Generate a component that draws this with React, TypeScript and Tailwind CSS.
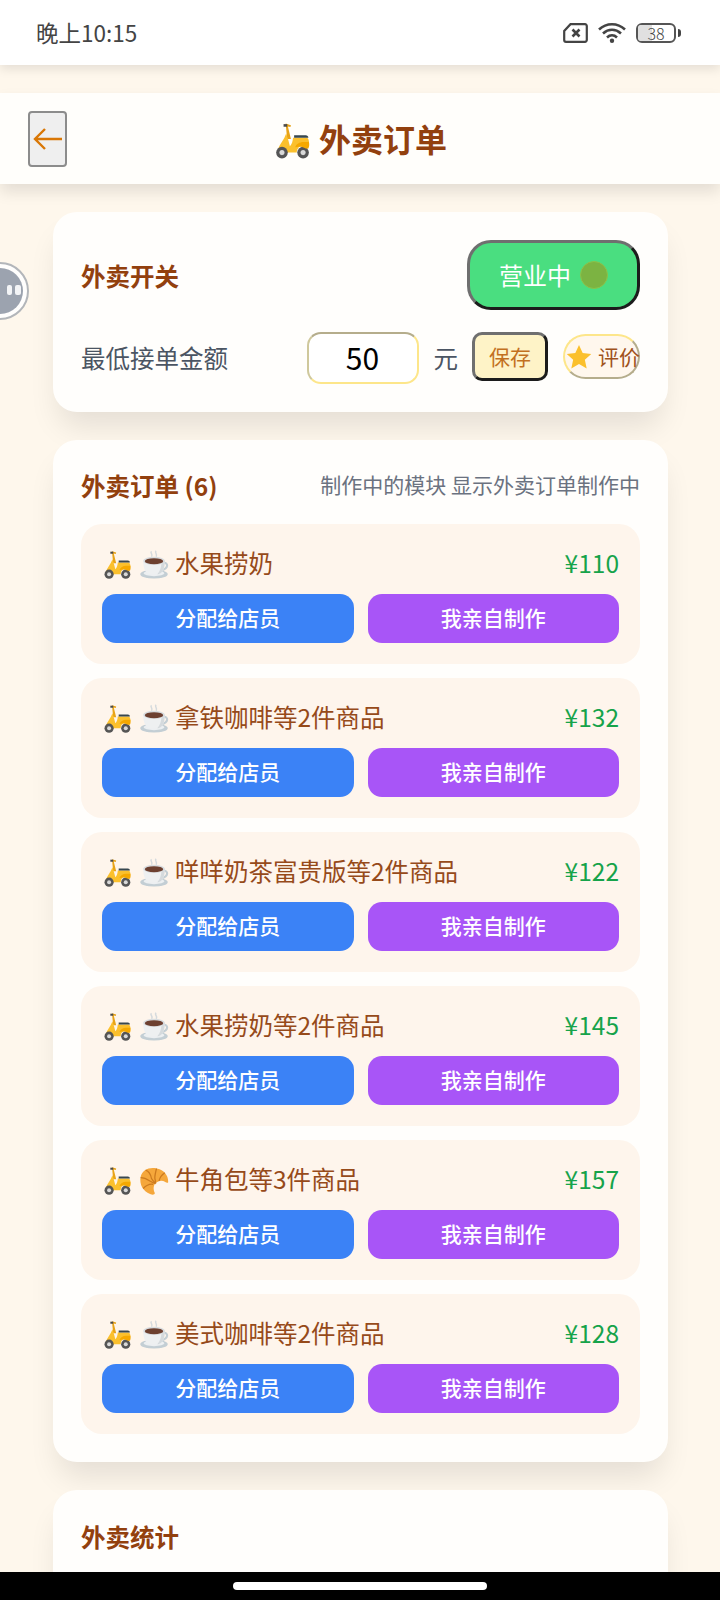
const orders = [
  { id: 1, food: 'coffee', name: '水果捞奶', price: 110 },
  { id: 2, food: 'coffee', name: '拿铁咖啡等2件商品', price: 132 },
  { id: 3, food: 'coffee', name: '咩咩奶茶富贵版等2件商品', price: 122 },
  { id: 4, food: 'coffee', name: '水果捞奶等2件商品', price: 145 },
  { id: 5, food: 'croissant', name: '牛角包等3件商品', price: 157 },
  { id: 6, food: 'coffee', name: '美式咖啡等2件商品', price: 128 },
]

function Scooter({ className }: { className: string }) {
  return (
    <svg viewBox="0 0 36 36" className={className}>
      <path d="M12 1.500l5 1.500-.5 1.800-2.400-.6 2.900 11.800h-3.600z" fill="#e8a317" />
      <path d="M10 2h3.500v2.500H10z" fill="#4b4b4b" />
      <path d="M12.500 11c-2 6-6 10-8 15l4 3h14c0-4 3-7 7-7h4c1-2 1-5-1-7H19c-.5 4-1 6-3 8-1-4-2-8-3.500-12z" fill="#fbc02d" />
      <path d="M20 12.500h11c1.500 0 2.500 1 2.500 2.500H20z" fill="#37474f" />
      <path d="M5 26c3-2 7-2 9 3H8z" fill="#e8a317" />
      <circle cx="8.500" cy="29" r="5.500" fill="#555" />
      <circle cx="8.500" cy="29" r="2.400" fill="#d9d9d9" />
      <circle cx="28.500" cy="29" r="5.500" fill="#555" />
      <circle cx="28.500" cy="29" r="2.400" fill="#d9d9d9" />
      <path d="M21 24c1-3 4-5 8-5h5c.5 2 .5 4-.5 6H31c-3-2-7-2-10-1z" fill="#f5a800" />
    </svg>
  )
}

function Coffee({ className }: { className: string }) {
  return (
    <svg viewBox="0 0 36 36" className={className}>
      <path d="M15 1.500c-2.500 2 2.500 3.500 0 6.500M20.500 1c-2.500 2.500 2.500 4 0 7" fill="none" stroke="#d5dadd" strokeWidth="1.800" />
      <ellipse cx="18" cy="29" rx="16.500" ry="5.200" fill="#c3ced4" />
      <ellipse cx="18" cy="28" rx="12.500" ry="3.400" fill="#eceff1" />
      <path d="M29 15.500c6.500-1 7 7-2.500 9" fill="none" stroke="#c3ced4" strokeWidth="2.600" />
      <path d="M5 13h26c0 9-3 16-8 16H13c-5 0-8-7-8-16z" fill="#eef0f1" />
      <path d="M22 29h1c5 0 8-7 8-16h-4c0 8-2 13-5 16z" fill="#d5dadd" />
      <ellipse cx="18" cy="13" rx="13" ry="4.800" fill="#d9dde0" />
      <ellipse cx="18" cy="13.400" rx="11" ry="3.600" fill="#6d4030" />
    </svg>
  )
}

function Croissant({ className }: { className: string }) {
  return (
    <svg viewBox="0 0 36 36" className={className}>
      <path d="M35 19c.5-8-6-15-14-16C12 1 4 5 2 13c-2 9 3 18 12 21 3 1 5 0 5-1.500-2-4-2-9 1-12 3-3 8-4 11-1.500 2 1.500 4 1.500 4 .5z" fill="#f5a73b" />
      <path d="M8 5c3 1 6 5 7 10 1 2 3 4 5 6M21 3c-1 4-2 8-2 11 0 2 1 4 1 7M31 8c-3 2-6 5-7 10M2 14c4 0 8 2 11 4 2 1 4 3 7 3M5 27c3-3 7-6 12-5" fill="none" stroke="#cc7a1e" strokeWidth="1.500" />
    </svg>
  )
}

function SimOff() {
  return (
    <svg viewBox="0 0 25 20" className="w-[25px] h-[20px]">
      <path d="M7.500 1.200H22a1.800 1.800 0 0 1 1.800 1.800v14a1.800 1.800 0 0 1-1.800 1.800H3a1.800 1.800 0 0 1-1.800-1.800V8z" fill="none" stroke="#444" strokeWidth="2.200" />
      <path d="M9.500 6.500l7 7M16.500 6.500l-7 7" stroke="#444" strokeWidth="2.600" />
    </svg>
  )
}

function Wifi() {
  return (
    <svg viewBox="0 0 28 21" className="w-[28px] h-[21px]">
      <path d="M1 7.500c7.500-7 18.500-7 26 0M5 11.500c5.500-5 12.500-5 18 0M9 15.500c3-2.800 7-2.800 10 0" fill="none" stroke="#444" strokeWidth="2.600" />
      <circle cx="14" cy="18.800" r="2.200" fill="#444" />
    </svg>
  )
}

function Battery() {
  return (
    <div className="flex items-center gap-[2px]">
      <div className="relative w-[40px] h-[20px] rounded-[6px] border-2 border-[#555] flex items-center justify-center">
        <div className="absolute left-0 top-0 bottom-0 w-[38%] rounded-l-[3px] bg-[#e0e0e0]" />
        <span className="relative text-[16px] leading-[16px] font-light text-[#444]">38</span>
      </div>
      <div className="w-[3px] h-[8px] bg-[#444] rounded-r-sm" />
    </div>
  )
}

function OrderCard({ food, name, price }: { food: string; name: string; price: number }) {
  return (
    <div className="h-[140px] rounded-[21px] bg-[#fef5ec] px-[21px] pt-[21px]">
      <div className="flex justify-between items-center h-[40px] mb-[9px]">
        <div className="flex items-center text-[24.500px] text-[#964a1a]">
          <Scooter className="w-[30px] h-[30px] mr-[7px]" />
          {food === 'coffee' ? (
            <Coffee className="w-[30px] h-[30px] mr-[6px]" />
          ) : (
            <Croissant className="w-[30px] h-[30px] mr-[6px]" />
          )}
          <span className="pb-[4px]">{name}</span>
        </div>
        <span className="text-[24.500px] text-[#16a34a] pb-[4px]">¥{price}</span>
      </div>
      <div className="flex gap-[14px]">
        <button className="flex-1 h-[49px] rounded-[14px] bg-[#3b82f6] text-white text-[21px] font-medium pb-[2px]">分配给店员</button>
        <button className="flex-1 h-[49px] rounded-[14px] bg-[#a855f7] text-white text-[21px] font-medium pb-[2px]">我亲自制作</button>
      </div>
    </div>
  )
}

export default function App() {
  return (
    <div
      className="relative h-[1600px] w-[720px] overflow-hidden flex flex-col bg-[#fef7ec]"
      style={{ fontFamily: '"Noto Sans CJK SC", "Noto Sans", sans-serif' }}
    >
      <div className="relative z-20 h-[65px] shrink-0 bg-white flex items-center justify-between pl-[36px] pr-[39px] shadow-[0_4px_10px_rgba(0,0,0,0.1)]">
        <span className="text-[22.500px] text-[#444]">晚上10:15</span>
        <div className="flex items-center gap-[10px]">
          <SimOff />
          <Wifi />
          <Battery />
        </div>
      </div>

      <div className="flex-1 overflow-hidden pt-[28px]">
        <div className="relative z-10 h-[91px] bg-[#fffefb] flex items-center justify-center shadow-[0_8px_14px_rgba(0,0,0,0.1)]">
          <button className="absolute left-[28px] top-[18px] w-[39px] h-[56px] bg-[#efefef] border-2 border-[#8c8c8c] rounded-[4px] flex items-center justify-center">
            <svg viewBox="0 0 30 24" className="w-[30px] h-[24px]">
              <path d="M29 12H2M12 2L2 12l10 10" fill="none" stroke="#d97706" strokeWidth="2.400" />
            </svg>
          </button>
          <div className="flex items-center text-[32px] font-bold text-[#92400e]">
            <Scooter className="w-[38px] h-[38px] mr-[8px] mt-[4px]" />
            <span className="pb-[2px]">外卖订单</span>
          </div>
        </div>

        <div className="pl-[53px] pr-[52px] pt-[28px] flex flex-col gap-[28px]">
          <div className="rounded-[24px] bg-[#fffefc] p-[28px] shadow-[0_20px_30px_-6px_rgba(0,0,0,0.1)]">
            <div className="flex items-center justify-between mb-[22px]">
              <h2 className="text-[24.500px] font-bold text-[#92400e] pt-[3px]">外卖开关</h2>
              <button className="w-[173px] h-[70px] rounded-[24px] bg-[#4ade80] border-[3px] border-t-[#6f6f6f] border-l-[#6f6f6f] border-r-[#1c1c1c] border-b-[#1c1c1c] text-white text-[24px] flex items-center justify-center gap-[9px]">
                营业中
                <span className="w-[28px] h-[28px] rounded-full bg-[#7cb342] border border-[#8bc34a]" />
              </button>
            </div>
            <div className="flex items-center">
              <span className="text-[24.500px] text-[#4b5563] flex-1">最低接单金额</span>
              <input
                readOnly
                value="50"
                className="w-[112px] h-[52px] rounded-[14px] border-2 border-[#fde68a] border-t-[#b5ad8c] border-l-[#cfc89c] bg-white text-center text-[30px] text-black outline-none pb-[2px]"
              />
              <span className="text-[24.500px] text-[#4b5563] ml-[15px] mr-[14px]">元</span>
              <button className="w-[76px] h-[49px] mb-[3px] rounded-[10px] bg-[#fef3c7] border-[3px] border-t-[#6f6f6f] border-l-[#6f6f6f] border-r-[#1c1c1c] border-b-[#1c1c1c] text-[21px] text-[#c2701f]">保存</button>
              <button className="ml-[15px] w-[77px] h-[45px] mb-[3px] rounded-full bg-[#fff7ed] border-2 border-[#fde68a] border-b-[#b5ad8c] border-r-[#b5ad8c] flex items-center justify-start pl-[1px] text-[21px] text-[#a0521c] whitespace-nowrap">
                <svg viewBox="0 0 24 24" className="w-[26px] h-[26px] mr-[6px] shrink-0">
                  <path d="M12 1l3.400 7.300 7.900.9-5.900 5.400 1.700 7.900L12 18.500l-7.100 4 1.700-7.900L.7 9.200l7.900-.9z" fill="#fbc02d" />
                </svg>
                评价
              </button>
            </div>
          </div>

          <div className="rounded-[24px] bg-[#fffefc] p-[28px] shadow-[0_20px_30px_-6px_rgba(0,0,0,0.1)]">
            <div className="flex items-center justify-between h-[38px] mb-[18px]">
              <h2 className="text-[24.500px] font-bold text-[#92400e] pb-[2px]">外卖订单 (6)</h2>
              <span className="text-[21px] text-[#6b7280] pb-[4px]">制作中的模块 显示外卖订单制作中</span>
            </div>
            <div className="flex flex-col gap-[14px]">
              {orders.map((order) => (
                <OrderCard key={order.id} food={order.food} name={order.name} price={order.price} />
              ))}
            </div>
          </div>

          <div className="rounded-[24px] bg-[#fffefc] p-[28px] h-[300px] shadow-[0_20px_30px_-6px_rgba(0,0,0,0.1)]">
            <h2 className="text-[24.500px] font-bold text-[#92400e] leading-[38px]">外卖统计</h2>
          </div>
        </div>
      </div>

      <div className="relative z-20 h-[28px] shrink-0 bg-black flex justify-center items-center">
        <div className="w-[254px] h-[8px] rounded-full bg-white" />
      </div>

      <div className="absolute z-30 left-[-29px] top-[262px] w-[58px] h-[58px] rounded-full border-2 border-[#b3b6ba] bg-white/90 flex items-center justify-center">
        <div className="relative w-[46px] h-[46px] rounded-full bg-[#9ca3af]">
          <div className="absolute left-[30px] top-[17px] w-[5px] h-[10px] rounded-[2px] bg-[#f3f4f6]" />
          <div className="absolute left-[38px] top-[17px] w-[6px] h-[10px] rounded-[2px] bg-[#f3f4f6]" />
        </div>
      </div>
    </div>
  )
}
